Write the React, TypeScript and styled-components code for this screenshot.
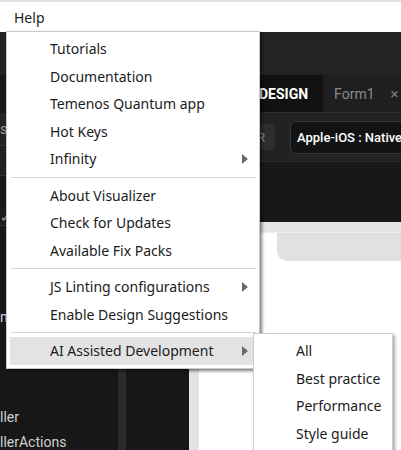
import styled, { createGlobalStyle } from 'styled-components'

const GlobalStyle = createGlobalStyle`
  html, body {
    margin: 0;
    padding: 0;
    background: #171717;
    overflow: hidden;
  }
  * { box-sizing: border-box; }
`

const Page = styled.div`
  position: relative;
  width: 401px;
  height: 450px;
  overflow: hidden;
  display: flex;
  flex-direction: column;
  background: #171717;
  font-family: Roboto, "Liberation Sans", sans-serif;
`

const MenuBar = styled.div`
  height: 32px;
  flex: none;
  display: flex;
  align-items: center;
  background: #ffffff;
  border-top: 2px solid #dfe1e5;
  padding-left: 14px;
`

const MenuBarItem = styled.span`
  font-family: "Noto Sans", sans-serif;
  font-size: 14px;
  color: #222;
`

const AppHeader = styled.div`
  height: 43px;
  flex: none;
  background: #232323;
`

const Workspace = styled.div`
  flex: 1;
  display: flex;
  min-height: 0;
`

const LeftPanel = styled.div`
  width: 118px;
  flex: none;
  display: flex;
  flex-direction: column;
  background: #171717;
  overflow: hidden;
`

const PanelRow = styled.div<{ $h: number; $bg: string; $line?: boolean }>`
  height: ${p => p.$h}px;
  flex: none;
  display: flex;
  align-items: center;
  background: ${p => p.$bg};
  border-bottom: ${p => (p.$line ? '1px solid #313131' : 'none')};
  color: #9a9a9a;
  font-size: 14px;
  white-space: nowrap;
`

const Tree = styled.div`
  flex: 1;
  padding-top: 78px;
  display: flex;
  flex-direction: column;
`

const TreeRow = styled.div<{ $indent?: number }>`
  height: 25px;
  display: flex;
  align-items: center;
  padding-left: ${p => p.$indent ?? 0}px;
  color: #cfcfcf;
  font-size: 14px;
  white-space: nowrap;
`

const Splitter = styled.div`
  width: 8px;
  flex: none;
  background: #2a2a2a;
`

const EditorArea = styled.div`
  flex: 1;
  display: flex;
  flex-direction: column;
  min-width: 0;
`

const TabBar = styled.div`
  height: 38px;
  flex: none;
  display: flex;
  align-items: stretch;
  background: #1f1f1f;
  border-bottom: 1px solid #2e2e2e;
  padding-left: 118px;
`

const Tab = styled.div<{ $active?: boolean }>`
  display: flex;
  align-items: center;
  gap: 16px;
  padding: ${p => (p.$active ? '0 15px' : '0 0 0 11px')};
  background: ${p => (p.$active ? '#111111' : 'transparent')};
  color: ${p => (p.$active ? '#ffffff' : '#8a8a8a')};
  font-size: 14px;
  font-weight: ${p => (p.$active ? 700 : 400)};
  white-space: nowrap;
`

const TabClose = styled.span`
  font-size: 15px;
  color: #7a7a7a;
`

const Toolbar = styled.div`
  height: 49px;
  flex: none;
  display: flex;
  align-items: center;
  gap: 15px;
  padding-left: 121px;
  background: #222222;
  border-bottom: 1px solid #2c2c2c;
`

const ToolButton = styled.div`
  width: 28px;
  height: 26px;
  flex: none;
  border-radius: 4px;
  background: #2e2e2e;
  color: #8a8a8a;
  font-size: 13px;
  display: flex;
  align-items: center;
  justify-content: center;
`

const PlatformSelect = styled.div`
  height: 33px;
  flex: none;
  display: flex;
  align-items: center;
  padding: 0 10px 0 6px;
  border: 1px solid #353535;
  border-radius: 6px;
  background: #131313;
  color: #ffffff;
  font-size: 13px;
  font-weight: 500;
  white-space: nowrap;
`

const DarkStrip = styled.div`
  height: 60px;
  flex: none;
  background: #181818;
`

const CanvasRow = styled.div`
  flex: 1;
  display: flex;
`

const MiddleColumn = styled.div`
  width: 63px;
  flex: none;
  background: #171717;
`

const Canvas = styled.div`
  flex: 1;
  background: #e4e4e4;
  padding: 10px 0 0 10px;
  display: flex;
`

const Screen = styled.div`
  flex: 1;
  background: #ffffff;
  border-top: 1px solid #ededed;
  display: flex;
  align-items: flex-start;
  padding-left: 78px;
`

const StatusNotch = styled.div`
  flex: 1;
  height: 28px;
  background: #e1e1e1;
  border-bottom-left-radius: 10px;
`

const HelpMenu = styled.div`
  position: absolute;
  left: 6px;
  top: 31px;
  width: 254px;
  padding: 3px;
  background: #ffffff;
  border: 1px solid #c9c9c9;
  box-shadow: 2px 2px 3px rgba(0, 0, 0, 0.5);
  font-family: "Noto Sans", sans-serif;
  font-size: 14px;
  color: #1b1b1b;
  z-index: 5;
`

const MenuItem = styled.div<{ $highlight?: boolean }>`
  position: relative;
  height: 27.5px;
  display: flex;
  align-items: center;
  padding: 0 8px 0 40px;
  background: ${p => (p.$highlight ? '#e3e3e3' : 'transparent')};
  white-space: nowrap;
`

const SubArrow = styled.span`
  margin-left: auto;
  width: 0;
  height: 0;
  border-left: 6px solid #6b6b6b;
  border-top: 5px solid transparent;
  border-bottom: 5px solid transparent;
`

const Separator = styled.div`
  height: 1px;
  margin: 4px 0 4px 1px;
  background: #d6d6d6;
`

const SubMenu = styled.div`
  position: absolute;
  left: 243px;
  top: -4px;
  width: 140px;
  padding: 3px;
  background: #ffffff;
  border: 1px solid #cfcfcf;
  box-shadow: 2px 2px 3px rgba(0, 0, 0, 0.35);
  z-index: 6;
`

const SubItem = styled.div`
  height: 27.5px;
  display: flex;
  align-items: center;
  padding-left: 39px;
  white-space: nowrap;
`

type Entry = { label: string; sub?: boolean } | 'sep'

const entries: Entry[] = [
  { label: 'Tutorials' },
  { label: 'Documentation' },
  { label: 'Temenos Quantum app' },
  { label: 'Hot Keys' },
  { label: 'Infinity', sub: true },
  'sep',
  { label: 'About Visualizer' },
  { label: 'Check for Updates' },
  { label: 'Available Fix Packs' },
  'sep',
  { label: 'JS Linting configurations', sub: true },
  { label: 'Enable Design Suggestions' },
  'sep',
]

const aiOptions = ['All', 'Best practice', 'Performance', 'Style guide']

export default function App() {
  return (
    <Page>
      <GlobalStyle />
      <MenuBar>
        <MenuBarItem>Help</MenuBarItem>
      </MenuBar>
      <AppHeader />
      <Workspace>
        <LeftPanel>
          <PanelRow $h={38} $bg="#181818" />
          <PanelRow $h={33} $bg="#242424" $line>s</PanelRow>
          <PanelRow $h={30} $bg="#202020" $line />
          <PanelRow $h={32} $bg="#181818" />
          <PanelRow $h={18} $bg="#1c1c1c" $line>✓</PanelRow>
          <Tree>
            <TreeRow>nts</TreeRow>
            <TreeRow />
            <TreeRow />
            <TreeRow />
            <TreeRow>ller</TreeRow>
            <TreeRow>llerActions</TreeRow>
          </Tree>
        </LeftPanel>
        <Splitter />
        <EditorArea>
          <TabBar>
            <Tab $active>DESIGN</Tab>
            <Tab>
              Form1
              <TabClose>×</TabClose>
            </Tab>
          </TabBar>
          <Toolbar>
            <ToolButton>R</ToolButton>
            <PlatformSelect>Apple-iOS : Native</PlatformSelect>
          </Toolbar>
          <DarkStrip />
          <CanvasRow>
            <MiddleColumn />
            <Canvas>
              <Screen>
                <StatusNotch />
              </Screen>
            </Canvas>
          </CanvasRow>
        </EditorArea>
      </Workspace>

      <HelpMenu>
        {entries.map((e, i) =>
          e === 'sep' ? (
            <Separator key={i} />
          ) : (
            <MenuItem key={i}>
              {e.label}
              {e.sub && <SubArrow />}
            </MenuItem>
          )
        )}
        <MenuItem $highlight>
          AI Assisted Development
          <SubArrow />
          <SubMenu>
            {aiOptions.map(o => (
              <SubItem key={o}>{o}</SubItem>
            ))}
          </SubMenu>
        </MenuItem>
      </HelpMenu>
    </Page>
  )
}
